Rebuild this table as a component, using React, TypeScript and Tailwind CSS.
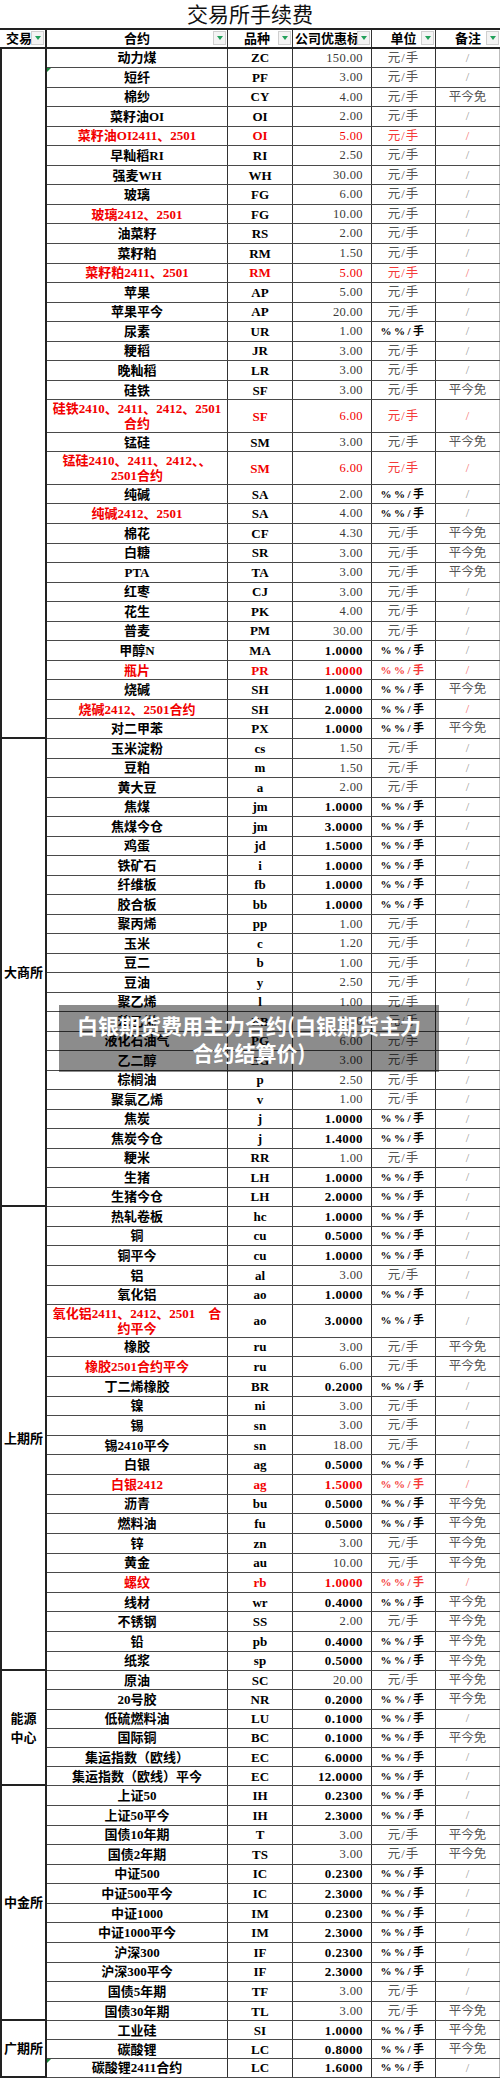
import React from "react";

type Red = "all" | "name" | "nameNote";
type Row = {
  n: string | string[];
  c: string;
  v: string;
  u: 0 | 1;
  r?: 0 | 1;
  red?: Red;
  flag?: boolean;
};
type Group = { label: string[]; h: string; rows: Row[] };

const groups: Group[] = [
  {
    label: [],
    h: "h-[19.56px]",
    rows: [
      { n: "动力煤", c: "ZC", v: "150.00", u: 0 },
      { n: "短纤", c: "PF", v: "3.00", u: 0, flag: true },
      { n: "棉纱", c: "CY", v: "4.00", u: 0, r: 1 },
      { n: "菜籽油OI", c: "OI", v: "2.00", u: 0 },
      { n: "菜籽油OI2411、2501", c: "OI", v: "5.00", u: 0, red: "all" },
      { n: "早籼稻RI", c: "RI", v: "2.50", u: 0 },
      { n: "强麦WH", c: "WH", v: "30.00", u: 0 },
      { n: "玻璃", c: "FG", v: "6.00", u: 0 },
      { n: "玻璃2412、2501", c: "FG", v: "10.00", u: 0, red: "name" },
      { n: "油菜籽", c: "RS", v: "2.00", u: 0 },
      { n: "菜籽粕", c: "RM", v: "1.50", u: 0 },
      { n: "菜籽粕2411、2501", c: "RM", v: "5.00", u: 0, red: "all" },
      { n: "苹果", c: "AP", v: "5.00", u: 0 },
      { n: "苹果平今", c: "AP", v: "20.00", u: 0 },
      { n: "尿素", c: "UR", v: "1.00", u: 1 },
      { n: "粳稻", c: "JR", v: "3.00", u: 0 },
      { n: "晚籼稻", c: "LR", v: "3.00", u: 0 },
      { n: "硅铁", c: "SF", v: "3.00", u: 0, r: 1 },
      { n: ["硅铁2410、2411、2412、2501", "合约"], c: "SF", v: "6.00", u: 0, red: "all" },
      { n: "锰硅", c: "SM", v: "3.00", u: 0, r: 1 },
      { n: ["锰硅2410、2411、2412、、", "2501合约"], c: "SM", v: "6.00", u: 0, red: "all" },
      { n: "纯碱", c: "SA", v: "2.00", u: 1 },
      { n: "纯碱2412、2501", c: "SA", v: "4.00", u: 1, red: "name" },
      { n: "棉花", c: "CF", v: "4.30", u: 0, r: 1 },
      { n: "白糖", c: "SR", v: "3.00", u: 0, r: 1 },
      { n: "PTA", c: "TA", v: "3.00", u: 0, r: 1 },
      { n: "红枣", c: "CJ", v: "3.00", u: 0 },
      { n: "花生", c: "PK", v: "4.00", u: 0 },
      { n: "普麦", c: "PM", v: "30.00", u: 0 },
      { n: "甲醇N", c: "MA", v: "1.0000", u: 1 },
      { n: "瓶片", c: "PR", v: "1.0000", u: 1, red: "all" },
      { n: "烧碱", c: "SH", v: "1.0000", u: 1, r: 1 },
      { n: "烧碱2412、2501合约", c: "SH", v: "2.0000", u: 1, red: "nameNote" },
      { n: "对二甲苯", c: "PX", v: "1.0000", u: 1, r: 1 },
    ],
  },
  {
    label: ["大商所"],
    h: "h-[19.5px]",
    rows: [
      { n: "玉米淀粉", c: "cs", v: "1.50", u: 0 },
      { n: "豆粕", c: "m", v: "1.50", u: 0 },
      { n: "黄大豆", c: "a", v: "2.00", u: 0 },
      { n: "焦煤", c: "jm", v: "1.0000", u: 1 },
      { n: "焦煤今仓", c: "jm", v: "3.0000", u: 1 },
      { n: "鸡蛋", c: "jd", v: "1.5000", u: 1 },
      { n: "铁矿石", c: "i", v: "1.0000", u: 1 },
      { n: "纤维板", c: "fb", v: "1.0000", u: 1 },
      { n: "胶合板", c: "bb", v: "1.0000", u: 1 },
      { n: "聚丙烯", c: "pp", v: "1.00", u: 0 },
      { n: "玉米", c: "c", v: "1.20", u: 0 },
      { n: "豆二", c: "b", v: "1.00", u: 0 },
      { n: "豆油", c: "y", v: "2.50", u: 0 },
      { n: "聚乙烯", c: "l", v: "1.00", u: 0 },
      { n: "苯乙烯", c: "EB", v: "3.00", u: 0 },
      { n: "液化石油气", c: "PG", v: "6.00", u: 0 },
      { n: "乙二醇", c: "EG", v: "3.00", u: 0 },
      { n: "棕榈油", c: "p", v: "2.50", u: 0 },
      { n: "聚氯乙烯", c: "v", v: "1.00", u: 0 },
      { n: "焦炭", c: "j", v: "1.0000", u: 1 },
      { n: "焦炭今仓", c: "j", v: "1.4000", u: 1 },
      { n: "粳米", c: "RR", v: "1.00", u: 0 },
      { n: "生猪", c: "LH", v: "1.0000", u: 1 },
      { n: "生猪今仓", c: "LH", v: "2.0000", u: 1 },
    ],
  },
  {
    label: ["上期所"],
    h: "h-[19.64px]",
    rows: [
      { n: "热轧卷板", c: "hc", v: "1.0000", u: 1 },
      { n: "铜", c: "cu", v: "0.5000", u: 1 },
      { n: "铜平今", c: "cu", v: "1.0000", u: 1 },
      { n: "铝", c: "al", v: "3.00", u: 0 },
      { n: "氧化铝", c: "ao", v: "1.0000", u: 1 },
      { n: ["氧化铝2411、2412、2501　合", "约平今"], c: "ao", v: "3.0000", u: 1, red: "name" },
      { n: "橡胶", c: "ru", v: "3.00", u: 0, r: 1 },
      { n: "橡胶2501合约平今", c: "ru", v: "6.00", u: 0, r: 1, red: "name" },
      { n: "丁二烯橡胶", c: "BR", v: "0.2000", u: 1 },
      { n: "镍", c: "ni", v: "3.00", u: 0 },
      { n: "锡", c: "sn", v: "3.00", u: 0 },
      { n: "锡2410平今", c: "sn", v: "18.00", u: 0 },
      { n: "白银", c: "ag", v: "0.5000", u: 1 },
      { n: "白银2412", c: "ag", v: "1.5000", u: 1, red: "all" },
      { n: "沥青", c: "bu", v: "0.5000", u: 1, r: 1 },
      { n: "燃料油", c: "fu", v: "0.5000", u: 1, r: 1 },
      { n: "锌", c: "zn", v: "3.00", u: 0, r: 1 },
      { n: "黄金", c: "au", v: "10.00", u: 0, r: 1 },
      { n: "螺纹", c: "rb", v: "1.0000", u: 1, red: "all" },
      { n: "线材", c: "wr", v: "0.4000", u: 1, r: 1 },
      { n: "不锈钢", c: "SS", v: "2.00", u: 0, r: 1 },
      { n: "铅", c: "pb", v: "0.4000", u: 1, r: 1 },
      { n: "纸浆", c: "sp", v: "0.5000", u: 1, r: 1 },
    ],
  },
  {
    label: ["能源", "中心"],
    h: "h-[19.2px]",
    rows: [
      { n: "原油", c: "SC", v: "20.00", u: 0, r: 1 },
      { n: "20号胶", c: "NR", v: "0.2000", u: 1, r: 1 },
      { n: "低硫燃料油", c: "LU", v: "0.1000", u: 1 },
      { n: "国际铜", c: "BC", v: "0.1000", u: 1, r: 1 },
      { n: "集运指数（欧线）", c: "EC", v: "6.0000", u: 1 },
      { n: "集运指数（欧线）平今", c: "EC", v: "12.0000", u: 1 },
    ],
  },
  {
    label: ["中金所"],
    h: "h-[19.58px]",
    rows: [
      { n: "上证50", c: "IH", v: "0.2300", u: 1 },
      { n: "上证50平今", c: "IH", v: "2.3000", u: 1 },
      { n: "国债10年期", c: "T", v: "3.00", u: 0, r: 1 },
      { n: "国债2年期", c: "TS", v: "3.00", u: 0, r: 1 },
      { n: "中证500", c: "IC", v: "0.2300", u: 1 },
      { n: "中证500平今", c: "IC", v: "2.3000", u: 1 },
      { n: "中证1000", c: "IM", v: "0.2300", u: 1 },
      { n: "中证1000平今", c: "IM", v: "2.3000", u: 1 },
      { n: "沪深300", c: "IF", v: "0.2300", u: 1 },
      { n: "沪深300平今", c: "IF", v: "2.3000", u: 1 },
      { n: "国债5年期", c: "TF", v: "3.00", u: 0 },
      { n: "国债30年期", c: "TL", v: "3.00", u: 0, r: 1 },
    ],
  },
  {
    label: ["广期所"],
    h: "h-[18.8px]",
    rows: [
      { n: "工业硅", c: "SI", v: "1.0000", u: 1, r: 1 },
      { n: "碳酸锂", c: "LC", v: "0.8000", u: 1, r: 1 },
      { n: "碳酸锂2411合约", c: "LC", v: "1.6000", u: 1, flag: true },
    ],
  },
];

function FilterBtn() {
  return (
    <span className="absolute right-[1px] top-1/2 flex h-[14px] w-[13px] -translate-y-1/2 items-center justify-center border border-[#cfcfcf] bg-[#f4f4f4]">
      <span className="h-0 w-0 border-x-[3px] border-t-[4px] border-x-transparent border-t-[#22a05a]" />
    </span>
  );
}

function HeaderRow() {
  return (
    <div className="flex h-[20.5px] border-y-2 border-[#222] text-[13px] font-bold leading-none text-black">
      <div className="relative flex w-[47px] shrink-0 items-center border-r-2 border-[#222] pl-[6px]">
        交易
        <FilterBtn />
      </div>
      <div className="relative flex w-[181px] shrink-0 items-center justify-center border-r border-[#333]">
        合约
        <FilterBtn />
      </div>
      <div className="relative flex w-[65px] shrink-0 items-center justify-center border-r border-[#333] pr-[6px]">
        品种
        <FilterBtn />
      </div>
      <div className="relative flex w-[79px] shrink-0 items-center whitespace-nowrap border-r border-[#333] pl-[2px]">
        公司优惠标
        <FilterBtn />
      </div>
      <div className="relative flex w-[64px] shrink-0 items-center justify-center border-r border-[#333]">
        单位
        <FilterBtn />
      </div>
      <div className="relative flex w-[64px] shrink-0 items-center justify-center">
        备注
        <FilterBtn />
      </div>
    </div>
  );
}

function DataRow({ row, h }: { row: Row; h: string }) {
  const allRed = row.red === "all";
  const nameRed = !!row.red;
  const noteRed = row.red === "all" || row.red === "nameNote";
  const boldVal = row.v.split(".")[1]?.length === 4;
  const tall = Array.isArray(row.n);

  return (
    <div className={`flex border-b border-[#4a4a4a] ${tall ? "h-[32.5px]" : h}`}>
      <div
        className={`relative flex w-[181px] shrink-0 flex-col items-center justify-center whitespace-nowrap border-r border-[#333] text-[13px] font-bold leading-[15px] ${
          nameRed ? "text-[#f20000]" : "text-black"
        }`}
      >
        {row.flag && (
          <span className="absolute left-0 top-0 h-0 w-0 border-r-[4px] border-t-[4px] border-r-transparent border-t-[#1b8a3c]" />
        )}
        {tall ? (row.n as string[]).map((l) => <span key={l}>{l}</span>) : row.n}
      </div>
      <div
        className={`flex w-[65px] shrink-0 items-center justify-center border-r border-[#333] text-[13px] font-bold leading-none ${
          allRed ? "text-[#f20000]" : "text-black"
        }`}
      >
        {row.c}
      </div>
      <div
        className={`flex w-[79px] shrink-0 items-center justify-end border-r border-[#333] pr-[8px] leading-none tracking-[0.4px] ${
          boldVal ? "text-[13px] font-bold" : "text-[12.5px] font-normal"
        } ${allRed ? "text-[#f20000]" : boldVal ? "text-black" : "text-[#3a3a3a]"}`}
      >
        {row.v}
      </div>
      <div
        className={`flex w-[64px] shrink-0 items-center justify-center border-r border-[#333] leading-none ${
          row.u === 1 ? "text-[11px] font-bold tracking-[2.5px]" : "text-[12.5px] font-normal tracking-[1px]"
        } ${allRed ? "text-[#f43a3a]" : row.u === 1 ? "text-black" : "text-[#555]"}`}
      >
        {row.u === 1 ? "%%/手" : "元/手"}
      </div>
      <div
        className={`flex w-[64px] shrink-0 items-center justify-center border-r border-[#bdbdbd] text-[12.5px] leading-none ${
          noteRed ? "text-[#f47070]" : row.r ? "text-[#555]" : "text-[#9a9a9a]"
        }`}
      >
        {row.r ? "平今免" : "/"}
      </div>
    </div>
  );
}

function GroupBlock({ group }: { group: Group }) {
  return (
    <div className="flex">
      <div className="flex w-[47px] shrink-0 flex-col items-center justify-center border-b-2 border-l-2 border-r-2 border-[#222] text-[13px] font-bold leading-[19px] text-black">
        {group.label.map((l) => (
          <span key={l}>{l}</span>
        ))}
      </div>
      <div className="flex flex-1 flex-col">
        {group.rows.map((row, i) => (
          <DataRow key={i} row={row} h={group.h} />
        ))}
      </div>
    </div>
  );
}

export default function App() {
  return (
    <div className="relative h-[2078px] w-[500px] overflow-hidden bg-white font-['Liberation_Serif','Noto_Sans_CJK_SC',serif]">
      <div className="flex h-[28px] items-center justify-center pt-[2px] text-[21px] leading-none text-[#111]">
        交易所手续费
      </div>
      <HeaderRow />
      {groups.map((g, i) => (
        <GroupBlock key={i} group={g} />
      ))}

      <div className="absolute left-[59px] top-[1005px] flex h-[67px] w-[380px] flex-col items-center justify-center bg-black/45 font-['Noto_Sans_CJK_SC',sans-serif] text-[21px] font-bold leading-[27px] text-white">
        <span className="whitespace-nowrap">白银期货费用主力合约(白银期货主力</span>
        <span>合约结算价)</span>
      </div>
    </div>
  );
}
